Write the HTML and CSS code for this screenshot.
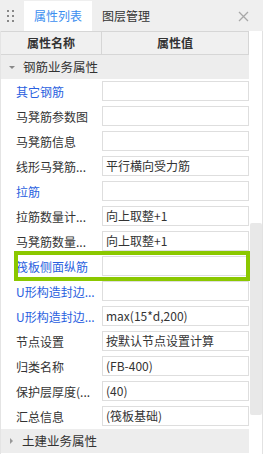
FILE: index.html
```html
<!doctype html>
<html>
    <head>
        <meta charset="utf-8" />
        <title>属性列表</title>
        <link rel="stylesheet" href="styles.css">
    </head>
    <body>
        <div id="panel">
            <header class="tabbar">
                <span class="grip">
                    <i></i><i></i><i></i><i></i><i></i><i></i>
                </span>
                <span class="tab active">属性列表</span>
                <span class="tab">图层管理</span>
                <span class="close">
                    <svg width="11" height="11" viewBox="0 0 11 11"><path d="M1 1L10 10M10 1L1 10" stroke="#a8a8a8" stroke-width="1.3" fill="none"/></svg>
                </span>
            </header>
            <div class="body">
                <div class="grid">
                    <div class="head">
                        <span>属性名称</span>
                        <span>属性值</span>
                    </div>
                    <div class="group open"><b class="tri"></b>钢筋业务属性</div>
                    <div class="row"><span class="name link">其它钢筋</span><span class="val"></span></div>
                    <div class="row"><span class="name">马凳筋参数图</span><span class="val"></span></div>
                    <div class="row"><span class="name">马凳筋信息</span><span class="val"></span></div>
                    <div class="row"><span class="name">线形马凳筋...</span><span class="val">平行横向受力筋</span></div>
                    <div class="row"><span class="name link">拉筋</span><span class="val"></span></div>
                    <div class="row"><span class="name">拉筋数量计...</span><span class="val">向上取整+1</span></div>
                    <div class="row"><span class="name">马凳筋数量...</span><span class="val">向上取整+1</span></div>
                    <div class="row picked"><span class="name link">筏板侧面纵筋</span><span class="val"></span></div>
                    <div class="row"><span class="name link">U形构造封边...</span><span class="val"></span></div>
                    <div class="row"><span class="name link">U形构造封边...</span><span class="val">max(15*d,200)</span></div>
                    <div class="row"><span class="name">节点设置</span><span class="val">按默认节点设置计算</span></div>
                    <div class="row"><span class="name">归类名称</span><span class="val">(FB-400)</span></div>
                    <div class="row"><span class="name">保护层厚度(...</span><span class="val">(40)</span></div>
                    <div class="row"><span class="name">汇总信息</span><span class="val">(筏板基础)</span></div>
                    <div class="group"><b class="tri"></b>土建业务属性</div>
                </div>
                <div class="scroll"><div class="thumb"></div></div>
            </div>
        </div>
    </body>
</html>
```

FILE: styles.css
```css
html, body {
    margin: 0px;
    padding: 0px;
}

body {
    font-family: "Noto Sans CJK SC", "Noto Sans", sans-serif;
    font-size: 12px;
    color: #333;
    background: #fff;
}

#panel {
    width: 263px;
    height: 454px;
    display: flex;
    flex-direction: column;
    overflow: hidden;
}

.tabbar {
    height: 31px;
    background-color: #efefef;
    display: flex;
    align-items: flex-end;
    box-sizing: border-box;
}

.grip {
    width: 8px;
    height: 12px;
    margin: 0 6px 9px 7px;
    display: grid;
    grid-template-columns: 2px 2px;
    column-gap: 3px;
    row-gap: 3px;
}

.grip i {
    width: 2px;
    height: 2px;
    background-color: #888;
}

.tab {
    height: 30px;
    line-height: 29px;
    padding: 0 10px;
}

.tab.active {
    background-color: #fff;
    color: #3c8ef0;
    margin-left: 3px;
    width: 48px;
}

.close {
    margin-left: auto;
    margin-right: 14px;
    height: 30px;
    display: flex;
    align-items: center;
}

.body {
    flex: 1;
    display: flex;
    border-left: 1px solid #e4e4e4;
}

.grid {
    width: 249px;
    display: flex;
    flex-direction: column;
}

.head {
    height: 24px;
    display: grid;
    grid-template-columns: 100px 1fr;
    background-color: #f0f0f0;
    border: 1px solid #d6d6d6;
    border-left: 0;
    box-sizing: border-box;
    font-weight: bold;
}

.head span {
    text-align: center;
    line-height: 22px;
}

.head span + span {
    border-left: 1px solid #d6d6d6;
}

.group {
    height: 24px;
    line-height: 24px;
    background-color: #ededed;
    font-size: 12.5px;
    display: flex;
    align-items: center;
    padding-left: 9px;
}

.tri {
    width: 0;
    height: 0;
    border-left: 3px solid #999;
    border-top: 3px solid transparent;
    border-bottom: 3px solid transparent;
    margin-right: 9px;
}

.group.open .tri {
    border-left: 3px solid transparent;
    border-right: 3px solid transparent;
    border-top: 3px solid #888;
    border-bottom: 0;
    margin-left: -1px;
    margin-right: 8px;
}

.row {
    height: 25px;
    display: grid;
    grid-template-columns: 101px 1fr;
    align-items: start;
    position: relative;
}

.name {
    padding-left: 15px;
    line-height: 25px;
    white-space: nowrap;
}

.link {
    color: #2a5fe0;
}

.val {
    margin-top: 2px;
    height: 20px;
    border: 1px solid #dedede;
    box-sizing: border-box;
    padding-left: 3px;
    line-height: 18px;
    white-space: nowrap;
}

.row.picked::after {
    content: "";
    position: absolute;
    left: 13px;
    right: -1px;
    top: -3px;
    bottom: -2px;
    border: 4px solid #8bc800;
}

.scroll {
    width: 12px;
    margin-left: 1px;
    border-right: 1px solid #e2e2e2;
    display: flex;
    flex-direction: column;
}

.thumb {
    margin-top: 192px;
    height: 192px;
    background-color: #e8e8e8;
    border-radius: 2px;
}
```
